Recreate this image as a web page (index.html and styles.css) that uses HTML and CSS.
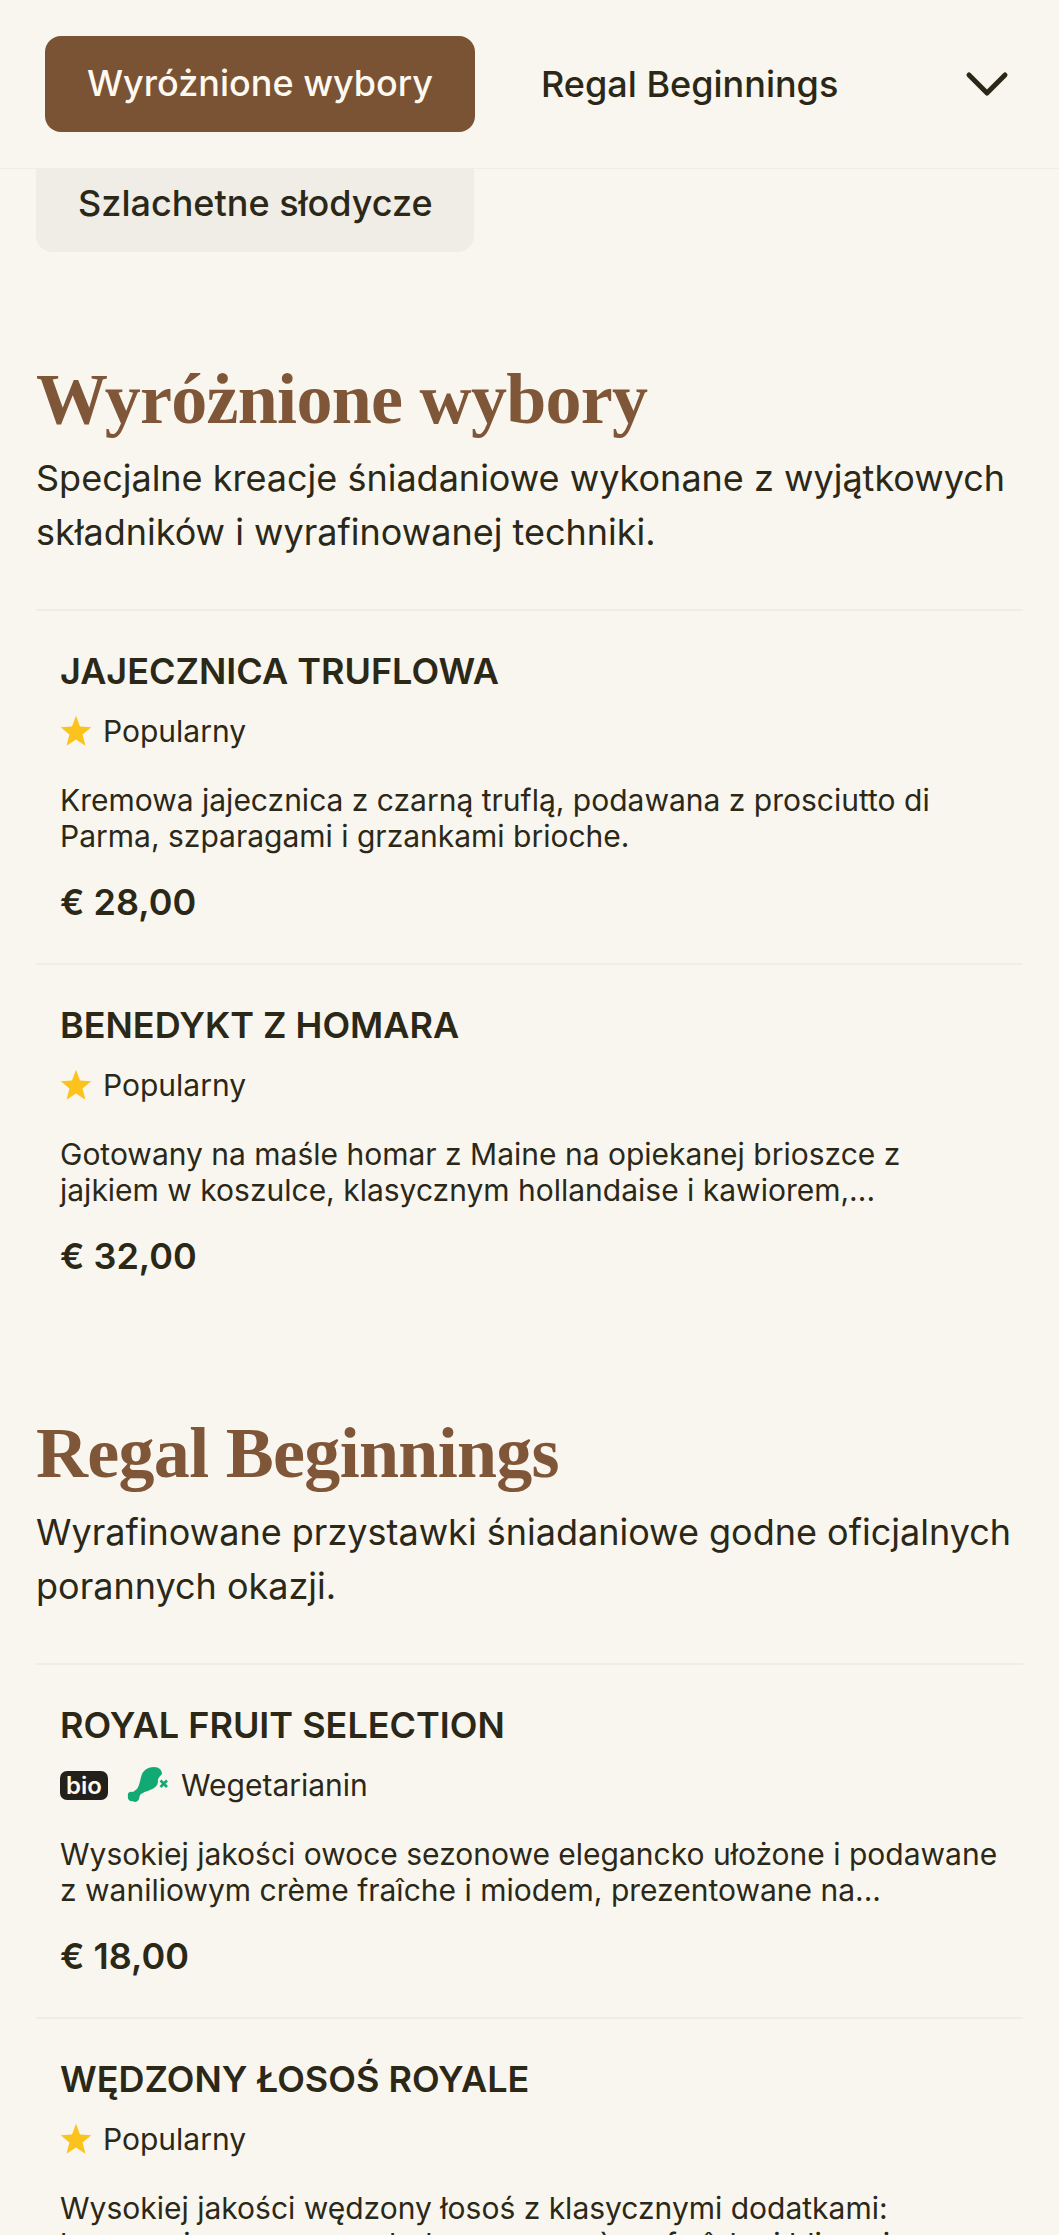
FILE: index.html
```html
<!DOCTYPE html>
<html lang="pl">
<head>
<meta charset="utf-8">
<title>Menu</title>
<link rel="stylesheet" href="styles.css">
</head>
<body>
<header class="topbar">
  <a class="tab tab-active">Wyróżnione wybory</a>
  <a class="tab">Regal Beginnings</a>
  <svg class="chevron" viewBox="0 0 44 28" aria-hidden="true"><path d="M4 4 L22 22 L40 4" fill="none" stroke="#2b2818" stroke-width="5" stroke-linecap="round" stroke-linejoin="round"/></svg>
</header>
<div class="overflow-row"><a class="chip">Szlachetne słodycze</a></div>
<main>
  <section class="category">
    <h2>Wyróżnione wybory</h2>
    <p class="lead">Specjalne kreacje śniadaniowe wykonane z wyjątkowych składników i wyrafinowanej techniki.</p>
    <article class="item">
      <h3>JAJECZNICA TRUFLOWA</h3>
      <div class="tags"><svg class="star" viewBox="0 0 24 24"><path d="M12 .5 L15 8.6 L23.5 9.2 L16.9 14.6 L19.1 23 L12 18.3 L4.9 23 L7.1 14.6 L.5 9.2 L9 8.6 Z"/></svg><span>Popularny</span></div>
      <p class="desc">Kremowa jajecznica z czarną truflą, podawana z prosciutto di Parma, szparagami i grzankami brioche.</p>
      <div class="price">€ 28,00</div>
    </article>
    <article class="item">
      <h3>BENEDYKT Z HOMARA</h3>
      <div class="tags"><svg class="star" viewBox="0 0 24 24"><path d="M12 .5 L15 8.6 L23.5 9.2 L16.9 14.6 L19.1 23 L12 18.3 L4.9 23 L7.1 14.6 L.5 9.2 L9 8.6 Z"/></svg><span>Popularny</span></div>
      <p class="desc">Gotowany na maśle homar z Maine na opiekanej brioszce z jajkiem w koszulce, klasycznym hollandaise i kawiorem,...</p>
      <div class="price">€ 32,00</div>
    </article>
  </section>
  <section class="category">
    <h2>Regal Beginnings</h2>
    <p class="lead">Wyrafinowane przystawki śniadaniowe godne oficjalnych porannych okazji.</p>
    <article class="item">
      <h3>ROYAL FRUIT SELECTION</h3>
      <div class="tags tags-diet"><span class="bio">bio</span><svg class="leg" viewBox="0 0 42 36"><path d="M27 0 C32 0 35 3 35 7 C33 9 31 11 31 13 C31 17 30 19 27 21 C23 24 17 24 13 28 L12 32 C11 35 7 36 6 34 C4 35 0 33 1 29 C0 26 3 24 6 25 L10 22 C13 18 13 12 15 7 C17 3 21 0 27 0 Z" fill="#12a974"/><path d="M33.5 13.5 L40 20 M40 13.5 L33.5 20" stroke="#12a974" stroke-width="2.6" fill="none"/></svg><span>Wegetarianin</span></div>
      <p class="desc">Wysokiej jakości owoce sezonowe elegancko ułożone i podawane z waniliowym crème fraîche i miodem, prezentowane na...</p>
      <div class="price">€ 18,00</div>
    </article>
    <article class="item">
      <h3>WĘDZONY ŁOSOŚ ROYALE</h3>
      <div class="tags"><svg class="star" viewBox="0 0 24 24"><path d="M12 .5 L15 8.6 L23.5 9.2 L16.9 14.6 L19.1 23 L12 18.3 L4.9 23 L7.1 14.6 L.5 9.2 L9 8.6 Z"/></svg><span>Popularny</span></div>
      <p class="desc">Wysokiej jakości wędzony łosoś z klasycznymi dodatkami: kaparami, czerwoną cebulą, sosem crème fraîche i blinami...</p>
      <div class="price">€ 26,00</div>
    </article>
  </section>
</main>
</body>
</html>
```
FILE: styles.css
```css
* { box-sizing: border-box; }
html, body { margin: 0; height: 2235px; overflow: hidden; }
body { background: #f9f6ef; color: #2b2818; font-family: Inter, "Liberation Sans", sans-serif; }
.topbar { height: 169px; display: flex; align-items: center; padding: 0 50px 0 45px; border-bottom: 1px solid #f0ede6; }
.tab { font-size: 36px; font-weight: 500; line-height: 94px; }
.tab-active { width: 430px; height: 96px; text-align: center; color: #fdf9f0; background: #7a5334; border-radius: 16px; }
.tab:nth-child(2) { margin-left: 66px; flex: 1; }
.chevron { width: 44px; height: 28px; margin-top: 2px; }
.overflow-row { padding: 0 36px; }
.chip { display: block; width: 438px; height: 83px; padding: 0 0 12px 42px; line-height: 68px; font-size: 36px; font-weight: 500; background: #f0ede7; border-radius: 0 0 16px 16px; }
main { padding: 102px 36px 0; }
.category { margin-bottom: 91px; }
h2 { margin: 0; font: 700 72px/90px "Liberation Serif", serif; color: #7f5638; letter-spacing: -.7px; }
.lead { margin: 7px 0 50px; font-size: 36px; line-height: 54px; font-weight: 400; }
.item { padding: 38px 24px 28px; border-top: 2px solid #f0ede6; height: 354px; }
h3 { margin: 0; font-size: 36px; line-height: 44px; font-weight: 600; }
.tags { display: flex; align-items: center; gap: 11px; height: 40px; margin-top: 18px; font-size: 30px; }
.tags-diet { gap: 0; }
.star { width: 32px; height: 32px; fill: #fbc31b; }
.bio { width: 48px; background: #22201a; color: #fdf9f0; text-align: center; font-size: 24px; font-weight: 600; line-height: 29px; border-radius: 7px; }
.leg { width: 42px; height: 36px; margin: 0 12px 0 19px; }
.desc { margin: 31px 0 0; font-size: 30px; line-height: 36px; }
.price { margin-top: 26px; font-size: 36px; line-height: 44px; font-weight: 600; }
```
